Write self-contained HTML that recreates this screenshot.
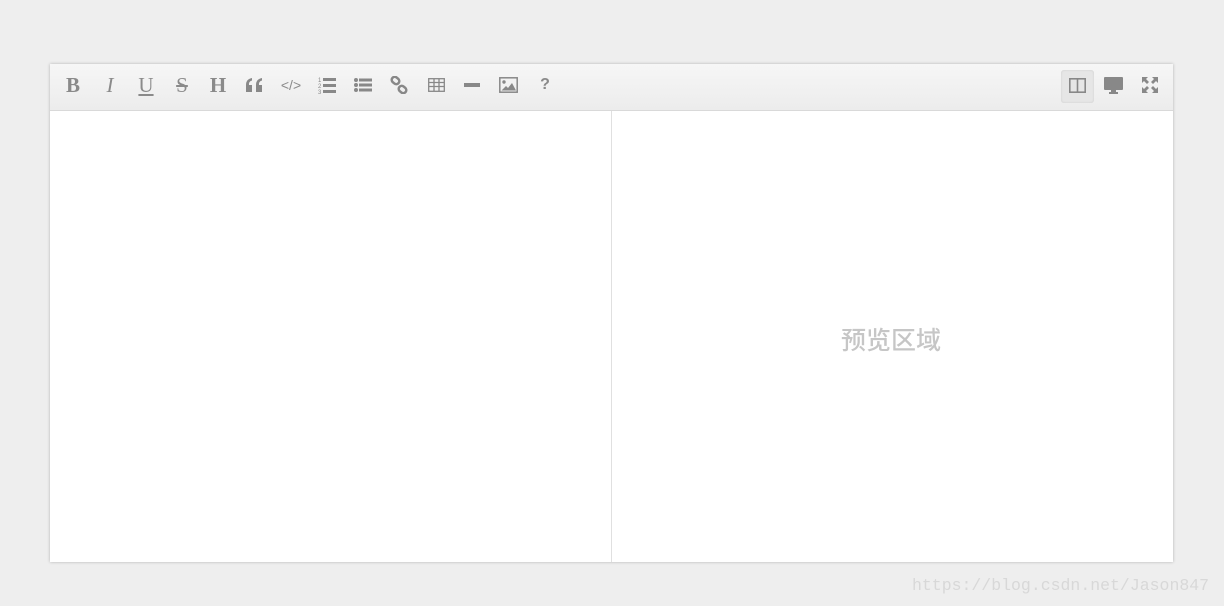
<!DOCTYPE html>
<html><head><meta charset="utf-8"><style>
*{margin:0;padding:0;box-sizing:border-box}
body{width:1224px;height:606px;background:#eeeeee;position:relative;overflow:hidden;font-family:"Liberation Sans",sans-serif}
.ed{position:absolute;left:50px;top:64px;width:1123px;height:498px;background:#fff;box-shadow:0 0 3px rgba(0,0,0,.25)}
.tb{position:absolute;left:0;top:0;width:100%;height:47px;background:linear-gradient(#f6f6f6,#ececec);border-bottom:1px solid #d9d9d9}
.ic{position:absolute;top:9px;width:24px;height:24px;margin-left:-12px;display:flex;align-items:center;justify-content:center;color:#8a8a8a;font-family:"Liberation Serif",serif;font-size:21px}
.div{position:absolute;left:561px;top:47px;width:1px;height:451px;background:#e0e0e0}
.pv{position:absolute;left:841px;top:321px;font-family:"Liberation Sans","Noto Sans CJK SC",sans-serif;font-size:25px;font-weight:500;color:#c6c6c6}
.wm{position:absolute;left:912px;top:576px;font-family:"Liberation Mono",monospace;font-size:16.5px;color:#d8d8d8}
.act{position:absolute;left:1011px;top:6px;width:33px;height:33px;background:#e6e6e6;border-radius:3px;box-shadow:inset 0 0 2px #ccc}
</style></head><body>
<div class="ed">
<div class="tb">
<div class="act"></div>
<div class="ic" style="left:23px;font-weight:bold">B</div>
<div class="ic" style="left:60px;font-style:italic">I</div>
<div class="ic" style="left:96px;text-decoration:underline">U</div>
<div class="ic" style="left:132px;text-decoration:line-through">S</div>
<div class="ic" style="left:168px;font-weight:bold">H</div>
<div class="ic" style="left:204px"><svg width="17" height="14" fill="#888"><path d="M0 7h6v7H0zM0 7Q0 1 6 0v2.5Q2.5 3.5 3 7z"/><path d="M10 7h6v7h-6zM10 7q0-6 6-7v2.5q-3.5 1-3 4.5z"/></svg></div>
<div class="ic" style="left:241px;font-family:'Liberation Sans';font-size:14px">&lt;/&gt;</div>
<div class="ic" style="left:277px"><svg width="18" height="18" fill="#888"><text x="0" y="6" font-size="6" font-family="Liberation Sans">1</text><text x="0" y="12" font-size="6" font-family="Liberation Sans">2</text><text x="0" y="18" font-size="6" font-family="Liberation Sans">3</text><rect x="5" y="2" width="13" height="3"/><rect x="5" y="8" width="13" height="3"/><rect x="5" y="14" width="13" height="3"/></svg></div>
<div class="ic" style="left:313px"><svg width="18" height="16" fill="#888"><circle cx="2" cy="3" r="2"/><circle cx="2" cy="8" r="2"/><circle cx="2" cy="13" r="2"/><rect x="5" y="1.5" width="13" height="3"/><rect x="5" y="6.5" width="13" height="3"/><rect x="5" y="11.5" width="13" height="3"/></svg></div>
<div class="ic" style="left:349px"><svg width="18" height="18" fill="none" stroke="#888" stroke-width="2.5"><rect x="1.5" y="1.5" width="8" height="6" rx="3" transform="rotate(40 5.5 4.5)"/><rect x="8.5" y="10.5" width="8" height="6" rx="3" transform="rotate(40 12.5 13.5)"/></svg></div>
<div class="ic" style="left:386px"><svg width="17" height="14" fill="none" stroke="#888" stroke-width="1.3"><rect x=".7" y=".7" width="15.6" height="12.6"/><path d="M.7 4.5H16.3M.7 8.5H16.3M6 .7V13.3M11 .7V13.3"/></svg></div>
<div class="ic" style="left:422px"><svg width="16" height="4"><rect width="16" height="4" fill="#888"/></svg></div>
<div class="ic" style="left:458px"><svg width="19" height="16"><rect x=".8" y=".8" width="17.4" height="14.4" fill="none" stroke="#888" stroke-width="1.5"/><circle cx="5" cy="5" r="1.7" fill="#888"/><path d="M2.5 13.5L7 9l2 2 4-5 4 7.5z" fill="#888"/></svg></div>
<div class="ic" style="left:495px;font-family:'Liberation Sans';font-weight:bold;font-size:16px">?</div>
<div class="ic" style="left:1027px"><svg width="17" height="15" fill="none" stroke="#888" stroke-width="1.6"><rect x=".8" y=".8" width="15.4" height="13.4"/><path d="M8.5 .8V14.2"/></svg></div>
<div class="ic" style="left:1063px"><svg width="19" height="17" fill="#888"><rect x="0" y="0" width="19" height="13" rx="1"/><rect x="7" y="13" width="5" height="2"/><rect x="5" y="15" width="9" height="2"/></svg></div>
<div class="ic" style="left:1100px"><svg width="16" height="16" fill="#888"><path d="M0 0h6L4 2l3 3-2 2-3-3-2 2zM16 0v6l-2-2-3 3-2-2 3-3-2-2zM0 16v-6l2 2 3-3 2 2-3 3 2 2zM16 16h-6l2-2-3-3 2-2 3 3 2-2z"/></svg></div>
</div>
<div class="div"></div>
</div>
<div class="pv">预览区域</div>
<div class="wm">https://blog.csdn.net/Jason847</div>
</body></html>
